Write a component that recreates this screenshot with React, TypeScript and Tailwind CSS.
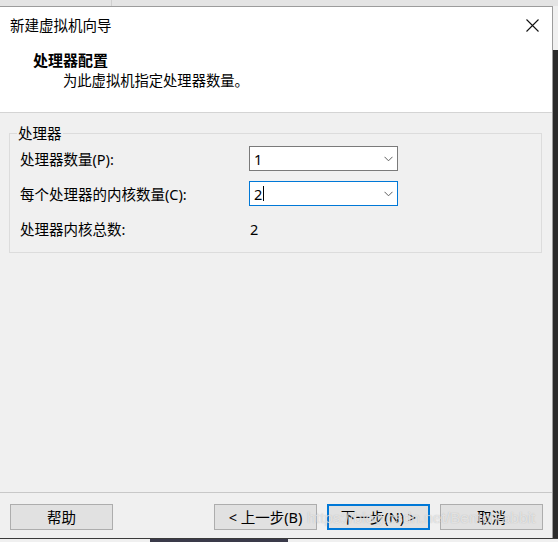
import React from 'react';

// 新建虚拟机向导 - 处理器配置 step, drawn as a Windows-style wizard dialog.
const font = "font-['Noto_Sans','Noto_Sans_CJK_SC',sans-serif]";

function Chevron() {
  return (
    <svg width="9" height="6" viewBox="0 0 9 6" className="shrink-0">
      <path d="M0.5 0.8 L4.5 4.8 L8.5 0.8" fill="none" stroke="#606060" strokeWidth="1" />
    </svg>
  );
}

function Combo({ value, focused }: { value: string; focused?: boolean }) {
  return (
    <div
      className={
        'flex h-[25px] w-[149px] items-center justify-between bg-white pl-[4px] pr-[4px] ' +
        (focused ? 'border border-[#0078d7]' : 'border border-[#7a7a7a]')
      }
    >
      <div className="flex items-center text-[14.5px] leading-[20px] text-black">
        <span>{value}</span>
        {focused && <span className="ml-[1px] h-[15px] w-px bg-black" />}
      </div>
      <Chevron />
    </div>
  );
}

function Btn({ label, primary }: { label: string; primary?: boolean }) {
  return (
    <button
      className={
        'flex h-[26px] w-[103px] items-center justify-center bg-[#e1e1e1] text-[14.5px] leading-[20px] text-black ' +
        (primary ? 'border-2 border-[#0078d7]' : 'border border-[#adadad]')
      }
    >
      {label}
    </button>
  );
}

export default function App() {
  return (
    <div className={`relative flex h-[542px] w-[558px] flex-col overflow-hidden bg-[#f0f0f0] ${font}`}>
      {/* strip of the desktop above the dialog */}
      <div className="flex h-[6px] shrink-0 bg-[#e4e4e4]">
        <div className="w-[112px] border-r border-[#cfcfcf]" />
      </div>

      <div className="flex min-h-0 flex-1">
        <div className="flex w-[553px] flex-col border-r border-t border-[#9c9c9c]">
          {/* header */}
          <div className="flex h-[105px] shrink-0 flex-col bg-white pt-[8px]">
            <div className="flex h-[20px] items-center justify-between pl-[10px] pr-[13px]">
              <span className="text-[14.5px] leading-[20px] text-black">新建虚拟机向导</span>
              <svg width="13" height="13" viewBox="0 0 13 13">
                <path d="M0.5 0.5 L12.5 12.5 M12.5 0.5 L0.5 12.5" stroke="#111" strokeWidth="1.1" />
              </svg>
            </div>
            <div className="mt-[15px] pl-[33px] text-[15px] font-bold leading-[20px] text-black">处理器配置</div>
            <div className="mt-[1px] pl-[63px] text-[14.3px] leading-[20px] text-black">为此虚拟机指定处理器数量。</div>
          </div>
          <div className="h-px shrink-0 bg-[#d4d4d4]" />

          {/* body */}
          <div className="flex flex-1 flex-col pl-[9px] pr-[10px] pt-[10px]">
            <fieldset className="border border-[#dcdcdc] px-[7px]">
              <legend className="px-[1px] text-[14.5px] leading-[20px] text-black">处理器</legend>
              <div className="flex flex-col gap-[10px] pb-[11px] pl-[3px] pt-[3px] text-[14.5px] leading-[20px] text-black">
                <div className="flex h-[25px] items-center">
                  <span className="w-[229px]">处理器数量(P):</span>
                  <Combo value="1" />
                </div>
                <div className="flex h-[25px] items-center">
                  <span className="w-[229px]">每个处理器的内核数量(C):</span>
                  <Combo value="2" focused />
                </div>
                <div className="flex h-[25px] items-center">
                  <span className="w-[230px]">处理器内核总数:</span>
                  <span>2</span>
                </div>
              </div>
            </fieldset>
          </div>

          <div className="h-px shrink-0 bg-[#c8c8c8]" />
          {/* footer buttons */}
          <div className="flex h-[45px] shrink-0 justify-between pl-[10px] pr-[9px] pt-[11px]">
            <Btn label="帮助" />
            <div className="flex gap-[10px]">
              <Btn label="< 上一步(B)" />
              <Btn label="下一步(N) >" primary />
              <Btn label="取消" />
            </div>
          </div>
        </div>
        <div className="flex w-[5px] flex-col">
          <div className="h-[44px] bg-[#f0f0f0]" />
          <div className="flex-1 bg-[#2b2b2b]" />
        </div>
      </div>

      {/* bottom edge of the screenshot */}
      <div className="h-px shrink-0 bg-[#3a3a3a]" />
      <div className="flex h-[3px] shrink-0 bg-[#f0f0f0]">
        <div className="ml-[150px] w-[138px] bg-[#3a3a4a]" />
      </div>

      {/* blog watermark laid over the buttons */}
      <div className="pointer-events-none absolute left-[307px] top-[508px] font-['Liberation_Sans',sans-serif] text-[15.5px] leading-[20px] text-white/60 [text-shadow:0_0_1px_rgba(140,140,140,0.6)]">
        https://blog.csdn.net/BentoRabbit
      </div>
    </div>
  );
}
